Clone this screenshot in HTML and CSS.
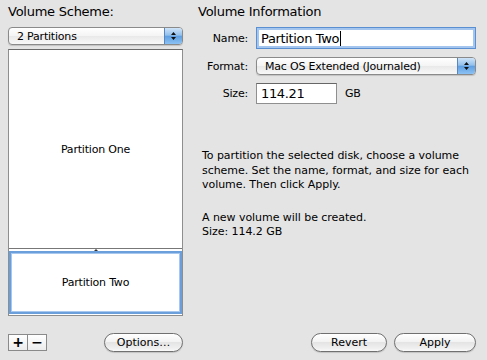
FILE: index.html
```html
<!DOCTYPE html>
<html>
<head>
<title>Partition</title>
<meta charset='utf-8'/>
<link rel="stylesheet" href="styles.css">
</head>
<body>
<div class="window">
	<div class="scheme">
		<h2 class="title">Volume Scheme:</h2>
		<div class="popup">
			<span class="popup-label">2 Partitions</span>
			<span class="stepper"><svg width="7" height="10" viewBox="0 0 7 10"><path d="M3.5 1 L6 4 H1Z M1 6 H6 L3.5 9Z" fill="#111"/></svg></span>
		</div>
		<div class="volumes">
			<div class="volume volume-one">Partition One</div>
			<div class="volume volume-two">Partition Two</div>
		</div>
		<div class="bar">
			<div class="plusminus"><span>+</span><span>&minus;</span></div>
			<button class="pill options">Options…</button>
		</div>
	</div>
	<div class="info">
		<h2 class="title">Volume Information</h2>
		<div class="form">
			<label>Name:</label>
			<div class="field name-field">Partition Two<span class="caret"></span></div>
			<label>Format:</label>
			<div class="popup">
				<span class="popup-label">Mac OS Extended (Journaled)</span>
				<span class="stepper"><svg width="7" height="10" viewBox="0 0 7 10"><path d="M3.5 1 L6 4 H1Z M1 6 H6 L3.5 9Z" fill="#111"/></svg></span>
			</div>
			<label>Size:</label>
			<div class="size-row"><div class="field size-field">114.21</div><span class="unit">GB</span></div>
		</div>
		<p class="help">To partition the selected disk, choose a volume<br/>scheme. Set the name, format, and size for each<br/>volume. Then click Apply.</p>
		<p class="status">A new volume will be created.<br/>Size: 114.2 GB</p>
		<div class="bar bar-right">
			<button class="pill revert">Revert</button>
			<button class="pill apply">Apply</button>
		</div>
	</div>
</div>
</body>
</html>
```

FILE: styles.css
```css
body {
	margin: 0;
	background: #e4e4e4;
	font-family: "DejaVu Sans", sans-serif;
	font-size: 11px;
	letter-spacing: -0.2px;
	color: #000;
}
.window {
	display: flex;
	gap: 15px;
	height: 360px;
	padding: 4px 11px 0 8px;
	box-sizing: border-box;
}
.scheme {
	width: 175px;
	display: flex;
	flex-direction: column;
}
.info {
	flex: 1;
	display: flex;
	flex-direction: column;
}
.title {
	margin: 0;
	font-size: 13px;
	font-weight: normal;
	line-height: 16px;
	letter-spacing: -0.25px;
}
.popup {
	height: 18px;
	box-sizing: border-box;
	border: 1px solid #8a8a8a;
	border-radius: 4px;
	background: linear-gradient(#fff, #f4f4f4 50%, #e9e9e9 51%, #f8f8f8);
	box-shadow: 0 1px 1px rgba(0,0,0,.15);
	display: flex;
	align-items: center;
	padding-left: 8px;
	overflow: hidden;
}
.scheme .popup {
	margin-top: 7px;
}
.popup-label {
	flex: 1;
}
.stepper {
	width: 17px;
	align-self: stretch;
	border-left: 1px solid #5a86bf;
	background: linear-gradient(#cfe4f9, #92c0ec 45%, #5f9fe2 52%, #8cc2f4);
	display: flex;
	align-items: center;
	justify-content: center;
}
.volumes {
	margin-top: 4px;
	height: 267px;
	box-sizing: border-box;
	border: 1px solid #8e8e8e;
	border-top-color: #6a6a6a;
	background: #fff;
	display: flex;
	flex-direction: column;
}
.volume {
	display: flex;
	align-items: center;
	justify-content: center;
}
.volume-one {
	flex: 1;
	border-bottom: 1px solid #777;
	position: relative;
}
.volume-one::after {
	content: "";
	position: absolute;
	left: 85px;
	bottom: -3px;
	border: 2px solid transparent;
	border-bottom-color: #333;
}
.volume-two {
	height: 63px;
	margin: 2px 0 1px;
	box-sizing: border-box;
	border: 2px solid #6a9fdc;
	box-shadow: inset 0 0 0 1px #a7c7ef;
}
.bar {
	margin-top: auto;
	padding-bottom: 8px;
	display: flex;
	align-items: center;
	justify-content: space-between;
}
.bar-right {
	justify-content: flex-end;
	gap: 7px;
}
.plusminus {
	display: flex;
	height: 17px;
	box-sizing: border-box;
	border: 1px solid #8a8a8a;
	background: linear-gradient(#fff, #ececec);
}
.plusminus span {
	width: 18px;
	text-align: center;
	font-size: 14px;
	font-weight: bold;
	line-height: 15px;
}
.plusminus span + span {
	border-left: 1px solid #8a8a8a;
}
.pill {
	height: 19px;
	padding: 0;
	border: 1px solid #707070;
	border-radius: 10px;
	background: linear-gradient(#fff, #f3f3f3 45%, #e4e4e4 50%, #f0f0f0 85%, #fafafa);
	box-shadow: 0 1px 1px rgba(0,0,0,.15);
	font: inherit;
	color: #000;
}
.options {
	width: 79px;
}
.revert {
	width: 76px;
}
.apply {
	width: 82px;
}
.form {
	margin-top: 7px;
	display: grid;
	grid-template-columns: 50px 1fr;
	column-gap: 8px;
	row-gap: 8px;
	align-items: center;
}
.form label {
	text-align: right;
}
.field {
	height: 22px;
	box-sizing: border-box;
	border: 1px solid #8f8f8f;
	border-top-color: #666;
	background: #fff;
	padding-left: 4px;
	display: flex;
	align-items: center;
	font-size: 13px;
	letter-spacing: -0.35px;
}
.name-field {
	border-color: #5a8fd2;
	box-shadow: inset 0 0 0 2px #a3c5ee;
}
.caret {
	display: inline-block;
	width: 1px;
	height: 15px;
	margin-left: 1px;
	background: #000;
}
.size-row {
	display: flex;
	align-items: center;
}
.size-field {
	width: 81px;
	height: 21px;
}
.unit {
	margin-left: 8px;
}
.help {
	margin: 45px 0 0;
	padding-left: 4px;
	line-height: 14.5px;
	letter-spacing: -0.05px;
	white-space: nowrap;
}
.status {
	margin: 18px 0 0;
	padding-left: 4px;
	line-height: 14px;
	letter-spacing: -0.05px;
}
```
